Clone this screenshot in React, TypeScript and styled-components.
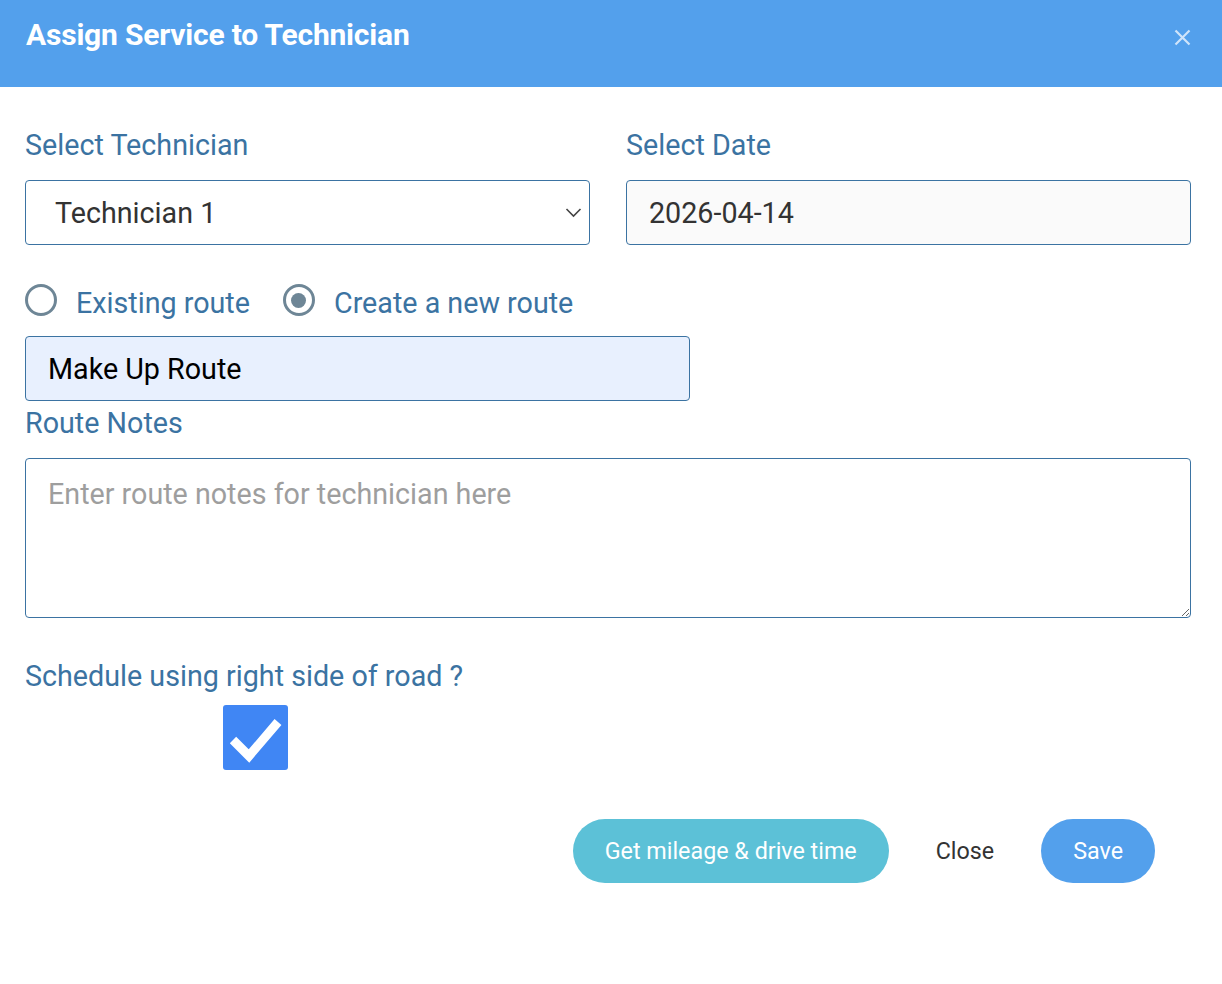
import React from "react";
import styled, { createGlobalStyle } from "styled-components";

const Global = createGlobalStyle`
  * { box-sizing: border-box; }
  html, body { margin: 0; padding: 0; background: #ffffff; }
  body { font-family: Roboto, "Liberation Sans", Arial, sans-serif; }
`;

const Dialog = styled.div`
  width: 1222px;
  min-height: 984px;
  background: #ffffff;
`;

const Header = styled.div`
  height: 87px;
  background: #53a0ec;
  display: flex;
  align-items: flex-start;
  justify-content: space-between;
  padding: 16px 31px 0 26px;
`;

const Title = styled.h1`
  margin: 0;
  font-size: 30px;
  line-height: 38px;
  font-weight: 700;
  color: #ffffff;
  letter-spacing: -0.2px;
`;

const CloseX = styled.button`
  border: none;
  background: transparent;
  padding: 0;
  margin-top: 13px;
  width: 17px;
  height: 17px;
  display: flex;
  align-items: center;
  justify-content: center;
  cursor: pointer;
`;

const Body = styled.div`
  padding: 43px 31px 0 25px;
  display: flex;
  flex-direction: column;
`;

const TwoCols = styled.div`
  display: grid;
  grid-template-columns: 1fr 1fr;
  column-gap: 36px;
`;

const Field = styled.div`
  display: flex;
  flex-direction: column;
`;

const Label = styled.label<{ $mt?: number; $mb?: number }>`
  display: block;
  font-size: 28.7px;
  line-height: 30px;
  color: #3b73a2;
  margin-top: ${(p) => p.$mt ?? 0}px;
  margin-bottom: ${(p) => p.$mb ?? 20}px;
`;

const SelectWrap = styled.div`
  position: relative;
  height: 65px;
`;

const Select = styled.select`
  appearance: none;
  -webkit-appearance: none;
  width: 100%;
  height: 65px;
  border: 1px solid #3b73a2;
  border-radius: 4px;
  background: #ffffff;
  padding: 0 40px 0 29px;
  font-family: Roboto, "Liberation Sans", Arial, sans-serif;
  font-size: 28.7px;
  color: #333333;
  outline: none;
`;

const Chevron = styled.svg`
  position: absolute;
  right: 8px;
  top: 25px;
  pointer-events: none;
`;

const TextInput = styled.input<{ $bg: string; $color: string }>`
  width: 100%;
  height: 65px;
  border: 1px solid #3b73a2;
  border-radius: 4px;
  background: ${(p) => p.$bg};
  padding: 0 22px;
  font-family: Roboto, "Liberation Sans", Arial, sans-serif;
  font-size: 28.7px;
  color: ${(p) => p.$color};
  outline: none;
`;

const RadioRow = styled.div`
  display: flex;
  align-items: center;
  height: 36px;
  margin-top: 40px;
  margin-bottom: 15px;
  gap: 33px;
`;

const RadioOption = styled.label`
  display: flex;
  align-items: center;
  gap: 19px;
  font-size: 28.7px;
  color: #3b73a2;
  cursor: pointer;
`;

const RadioCircle = styled.span<{ $checked: boolean }>`
  width: 32px;
  height: 32px;
  border-radius: 50%;
  border: 3px solid #6e8696;
  display: flex;
  align-items: center;
  justify-content: center;
  margin-top: -6px;
  &::after {
    content: "";
    width: 15px;
    height: 15px;
    border-radius: 50%;
    background: #6e8696;
    display: ${(p) => (p.$checked ? "block" : "none")};
  }
`;

const RouteNameBox = styled.div`
  width: 665px;
`;

const NotesArea = styled.textarea`
  width: 100%;
  height: 160px;
  border: 1px solid #3b73a2;
  border-radius: 4px;
  padding: 18px 22px;
  font-family: Roboto, "Liberation Sans", Arial, sans-serif;
  font-size: 28.7px;
  line-height: 34px;
  color: #333333;
  outline: none;
  resize: vertical;
  &::placeholder {
    color: #9e9e9e;
  }
`;

const CheckBox = styled.span`
  width: 65px;
  height: 65px;
  margin-left: 198px;
  background: #4086f4;
  border-radius: 3px;
  display: flex;
  align-items: center;
  justify-content: center;
`;

const Footer = styled.div`
  display: flex;
  justify-content: flex-end;
  align-items: center;
  gap: 23px;
  margin-top: 49px;
  padding-right: 36px;
`;

const PillButton = styled.button<{ $bg: string }>`
  height: 64px;
  border: none;
  border-radius: 32px;
  background: ${(p) => p.$bg};
  color: #ffffff;
  font-family: Roboto, "Liberation Sans", Arial, sans-serif;
  font-size: 23.3px;
  padding: 0 32px;
  cursor: pointer;
`;

const TextButton = styled.button`
  height: 64px;
  border: none;
  background: transparent;
  color: #333333;
  font-family: Roboto, "Liberation Sans", Arial, sans-serif;
  font-size: 23.3px;
  padding: 0 24px;
  cursor: pointer;
`;

export default function App() {
  const [route, setRoute] = React.useState<"existing" | "new">("new");
  return (
    <Dialog>
      <Global />
      <Header>
        <Title>Assign Service to Technician</Title>
        <CloseX aria-label="Close">
          <svg width="17" height="17" viewBox="0 0 17 17">
            <path d="M1.5 1.5 L15.5 15.5 M15.5 1.5 L1.5 15.5" stroke="#cfe4fa" strokeWidth="2.2" strokeLinecap="butt" />
          </svg>
        </CloseX>
      </Header>
      <Body>
        <TwoCols>
          <Field>
            <Label>Select Technician</Label>
            <SelectWrap>
              <Select defaultValue="t1">
                <option value="t1">Technician 1</option>
                <option value="t2">Technician 2</option>
              </Select>
              <Chevron width="17" height="14" viewBox="0 0 17 14">
                <path d="M1.5 4 L8.5 11 L15.5 4" fill="none" stroke="#444" strokeWidth="1.6" />
              </Chevron>
            </SelectWrap>
          </Field>
          <Field>
            <Label>Select Date</Label>
            <TextInput $bg="#fafafa" $color="#333333" defaultValue="2026-04-14" readOnly />
          </Field>
        </TwoCols>

        <RadioRow>
          <RadioOption onClick={() => setRoute("existing")}>
            <RadioCircle $checked={route === "existing"} />
            Existing route
          </RadioOption>
          <RadioOption onClick={() => setRoute("new")}>
            <RadioCircle $checked={route === "new"} />
            Create a new route
          </RadioOption>
        </RadioRow>

        <RouteNameBox>
          <TextInput $bg="#e8f0fe" $color="#000000" defaultValue="Make Up Route" />
        </RouteNameBox>

        <Label $mt={7}>Route Notes</Label>
        <NotesArea placeholder="Enter route notes for technician here" />

        <Label $mt={43} $mb={14}>Schedule using right side of road ?</Label>
        <CheckBox role="checkbox" aria-checked="true">
          <svg width="65" height="65" viewBox="0 0 65 65">
            <path d="M10 35 L26 51 L55 17" fill="none" stroke="#ffffff" strokeWidth="9" strokeLinejoin="miter" />
          </svg>
        </CheckBox>

        <Footer>
          <PillButton $bg="#5cc1d7">Get mileage &amp; drive time</PillButton>
          <TextButton>Close</TextButton>
          <PillButton $bg="#53a0ec">Save</PillButton>
        </Footer>
      </Body>
    </Dialog>
  );
}
